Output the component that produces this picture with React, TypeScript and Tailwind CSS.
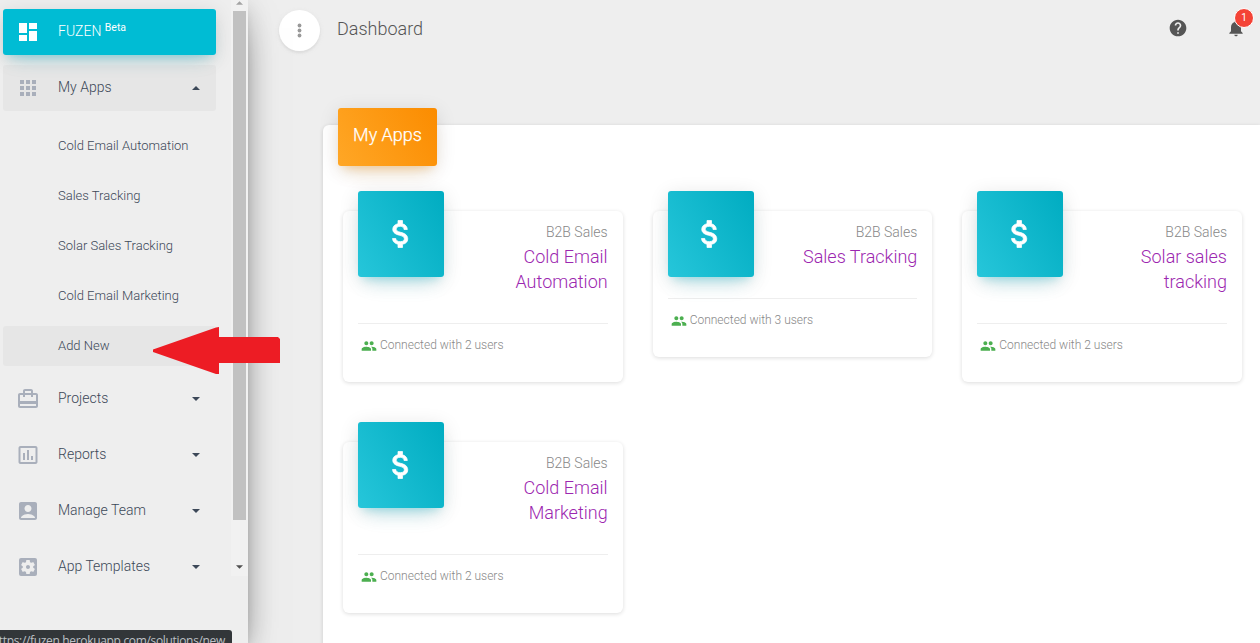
import type { ReactNode } from 'react'
import clsx from 'clsx'
import {
  MdAccountBox,
  MdApps,
  MdCardTravel,
  MdDashboard,
  MdHelp,
  MdInsertChartOutlined,
  MdNotifications,
  MdPeople,
  MdSettingsApplications,
} from 'react-icons/md'

type App = { id: string; title: string; users: number }

const apps: Array<App> = [
  { id: 'cold-email-automation', title: 'Cold Email Automation', users: 2 },
  { id: 'sales-tracking', title: 'Sales Tracking', users: 3 },
  { id: 'solar-sales-tracking', title: 'Solar sales tracking', users: 2 },
  { id: 'cold-email-marketing', title: 'Cold Email Marketing', users: 2 },
]

const appLinks = ['Cold Email Automation', 'Sales Tracking', 'Solar Sales Tracking', 'Cold Email Marketing', 'Add New']

function Caret({ up, className }: { up?: boolean; className?: string }) {
  return (
    <svg viewBox="0 0 8 4" className={clsx('h-1 w-2 fill-current', up && 'rotate-180', className)}>
      <path d="M0 0h8L4 4z" />
    </svg>
  )
}

function DollarIcon() {
  return (
    <svg viewBox="0 0 24 24" className="relative -left-[0.5px] size-9 fill-current stroke-current stroke-[0.5]">
      <path d="M11.8 10.9c-2.27-.59-3-1.2-3-2.15 0-1.09 1.01-1.85 2.7-1.85 1.78 0 2.44.85 2.5 2.1h2.21c-.07-1.72-1.12-3.3-3.21-3.81V3h-3v2.16c-1.94.42-3.5 1.68-3.5 3.61 0 2.31 1.91 3.46 4.7 4.13 2.5.6 3 1.48 3 2.41 0 .69-.49 1.79-2.7 1.79-2.06 0-2.87-.92-2.98-2.1h-2.2c.12 2.19 1.76 3.42 3.68 3.83V21h3v-2.15c1.95-.37 3.5-1.5 3.5-3.55 0-2.84-2.43-3.81-4.7-4.4z" />
    </svg>
  )
}

function MoreIcon() {
  return (
    <svg viewBox="0 0 17 17" className="size-[17px] fill-current">
      <circle cx="8.5" cy="3.5" r="1.9" />
      <circle cx="8.5" cy="8.5" r="1.9" />
      <circle cx="8.5" cy="13.5" r="1.9" />
    </svg>
  )
}

function NavItem({ icon, label, open }: { icon: ReactNode; label: string; open?: boolean }) {
  return (
    <a
      className={clsx(
        'flex h-[46px] items-center rounded-[3px] pr-4 pl-[13px] text-sm font-light text-[#3c4858]',
        open && 'bg-[#c8c8c8]/20',
      )}
    >
      <span className="mr-[18px] text-2xl text-[#a9afbb]">{icon}</span>
      <span className="relative -top-px flex-1">{label}</span>
      <Caret up={open} />
    </a>
  )
}

function Sidebar() {
  return (
    <aside className="relative z-10 flex h-full w-[248px] shrink-0 items-start bg-[#eee] shadow-[0_16px_38px_-12px_rgba(0,0,0,0.56),0_4px_25px_0_rgba(0,0,0,0.12),0_8px_10px_-5px_rgba(0,0,0,0.2)]">
      <nav className="mt-[9px] ml-[3px] w-[213px]">
        <a className="flex h-[46px] items-center rounded-[3px] bg-[#00bcd4] pl-[13px] text-sm text-white shadow-[0_12px_20px_-10px_rgba(0,188,212,0.28),0_4px_20px_0_rgba(0,0,0,0.12),0_7px_8px_-5px_rgba(0,188,212,0.2)]">
          <MdDashboard className="mr-[18px] size-6" />
          <span className="relative -top-px font-light">
            FUZEN <sup className="-top-[5px] text-[10.5px] font-normal">Beta</sup>
          </span>
        </a>

        <div className="mt-2.5">
          <NavItem icon={<MdApps />} label="My Apps" open />
        </div>
        <ul className="mt-[15px] flex flex-col gap-2.5">
          {appLinks.map((link) => (
            <li
              key={link}
              className={clsx(
                'flex h-10 items-center rounded-[3px] pl-[55px] text-[13px] font-light text-[#3c4858]',
                link === 'Add New' && 'bg-[#c8c8c8]/20',
              )}
            >
              {link}
            </li>
          ))}
        </ul>

        <div className="mt-2.5 flex flex-col gap-2.5">
          <NavItem icon={<MdCardTravel />} label="Projects" />
          <NavItem icon={<MdInsertChartOutlined />} label="Reports" />
          <NavItem icon={<MdAccountBox />} label="Manage Team" />
          <NavItem icon={<MdSettingsApplications />} label="App Templates" />
        </div>
      </nav>

      <div className="ml-auto flex h-[576px] w-[17px] flex-col items-center bg-[#f1f1f1]">
        <Caret up className="mt-px mb-1.5 h-1 w-[7px] shrink-0 text-[#a3a3a3]" />
        <div className="h-[509px] w-[13px] shrink-0 bg-[#c1c1c1]" />
        <Caret className="mt-auto mb-[7px] w-[7px] shrink-0 text-[#505050]" />
      </div>
    </aside>
  )
}

function Header() {
  return (
    <header className="flex h-[61px] items-center pr-[14px] pl-[31px]">
      <button className="grid size-[41px] place-items-center rounded-full bg-white text-[#999] shadow-[0_2px_2px_0_rgba(153,153,153,0.14),0_1px_5px_0_rgba(153,153,153,0.12)]">
        <MoreIcon />
      </button>
      <h1 className="relative -top-0.5 ml-[17px] text-lg font-light text-[#555]">Dashboard</h1>
      <div className="relative -top-[2.5px] ml-auto flex items-center gap-[38px] text-[#555]">
        <MdHelp className="size-5" />
        <span className="relative">
          <MdNotifications className="size-5" />
          <span className="absolute -top-[10px] left-2 grid size-5 place-items-center rounded-full border border-white bg-[#f44336] text-[10px] leading-none text-white">
            1
          </span>
        </span>
      </div>
    </header>
  )
}

function AppCard({ app }: { app: App }) {
  return (
    <article className="rounded-md bg-white px-[15px] shadow-[0_1px_4px_0_rgba(0,0,0,0.14)]">
      <div className="flex items-start justify-between">
        <div className="-mt-5 -mb-5 grid size-[86px] shrink-0 place-items-center rounded-[3px] bg-[linear-gradient(60deg,#26c6da,#00acc1)] text-white shadow-[0_12px_20px_-10px_rgba(0,188,212,0.28),0_4px_20px_0_rgba(0,0,0,0.12),0_7px_8px_-5px_rgba(0,188,212,0.2)]">
          <DollarIcon />
        </div>
        <div className="w-[116px] pt-[11px] text-right font-light">
          <p className="text-sm leading-5 text-[#888]">B2B Sales</p>
          <h3 className="mt-0.5 text-lg leading-[25px] text-[#9c27b0]">{app.title}</h3>
        </div>
      </div>
      <div className="mt-[29px] flex h-[59px] items-start border-t border-[#eee] pt-3 pl-[3px] text-xs leading-[18px] font-light text-[#888]">
        <MdPeople className="mt-0.5 mr-[3px] size-4 text-[#4caf50]" />
        Connected with {app.users} users
      </div>
    </article>
  )
}

export default function App() {
  return (
    <div className="relative flex h-[643px] w-[1260px] overflow-hidden bg-[#eee] font-[Roboto,sans-serif]">
      <Sidebar />

      <main className="min-w-0 flex-1">
        <Header />
        <section className="mt-16 ml-[75px] h-[700px] rounded-tl-md bg-white pr-[18px] pl-[15px] shadow-[0_1px_4px_0_rgba(0,0,0,0.14)]">
          <h2 className="flex h-[58px] w-[99px] -translate-y-[17px] items-center justify-center rounded-[3px] bg-[linear-gradient(60deg,#ffa726,#fb8c00)] pb-1 text-lg font-light text-white shadow-[0_12px_20px_-10px_rgba(255,152,0,0.28),0_4px_20px_0_rgba(0,0,0,0.12),0_7px_8px_-5px_rgba(255,152,0,0.2)] [-webkit-text-stroke:0.25px_white]">
            My Apps
          </h2>
          <div className="mt-7 ml-[5px] grid grid-cols-3 items-start gap-x-[30px] gap-y-[60px]">
            {apps.map((app) => (
              <AppCard key={app.id} app={app} />
            ))}
          </div>
        </section>
      </main>

      {/* pointer to the hovered link */}
      <svg viewBox="0 0 128 48" className="absolute top-[327px] left-[152px] z-20 h-12 w-32 fill-[#ed1c24]">
        <path d="M1 22.5 64 0.5l3-.5v10h59l2 2v24H67v11h-3L1 25z" />
      </svg>

      {/* browser status bubble, scrolled past its first letter */}
      <div className="absolute bottom-0 left-0 z-20 flex h-[13px] w-[232px] justify-end overflow-hidden rounded-tr-[3px] bg-[#323639] pr-[7px] font-['Open_Sans','Noto_Sans',sans-serif] text-xs leading-[22px] tracking-[-0.33px] whitespace-nowrap text-[#bdc1c6]">
        https://fuzen.herokuapp.com/solutions/new
      </div>
    </div>
  )
}
